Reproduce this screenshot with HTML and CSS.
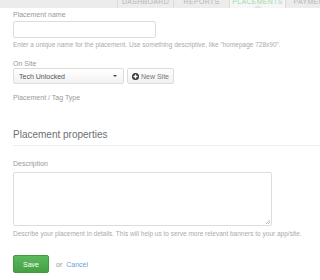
FILE: index.html
```html
<!DOCTYPE html>
<html>
<head>
    <meta charset="UTF-8">
    <title>Placement</title>
    <link rel="stylesheet" href="styles.css">
</head>
<body>
    <div class="topnav">
        <div class="tab">DASHBOARD</div>
        <div class="tab">REPORTS</div>
        <div class="tab active">PLACEMENTS</div>
        <div class="tab">PAYMENTS</div>
    </div>

    <div class="form">
        <div class="field">
            <label>Placement name</label>
            <input type="text" class="name-input">
            <div class="help">Enter a unique name for the placement. Use something descriptive, like "homepage 728x90".</div>
        </div>

        <div class="field">
            <label>On Site</label>
            <div class="site-row">
                <div class="select">
                    <span>Tech Unlocked</span>
                    <span class="caret"></span>
                </div>
                <div class="btn-new">
                    <svg width="7" height="7" viewBox="0 0 8 8"><circle cx="4" cy="4" r="4" fill="#333"/><rect x="3.2" y="1.6" width="1.6" height="4.8" fill="#fff"/><rect x="1.6" y="3.2" width="4.8" height="1.6" fill="#fff"/></svg>
                    New Site
                </div>
            </div>
        </div>

        <div class="field">
            <label>Placement / Tag Type</label>
        </div>

        <h2 class="section-title">Placement properties</h2>

        <div class="field desc">
            <label>Description</label>
            <div class="textarea"><span class="grip"></span></div>
            <div class="help">Describe your placement in details. This will help us to serve more relevant banners to your app/site.</div>
        </div>

        <div class="actions">
            <div class="btn-save">Save</div>
            <span class="or">or</span>
            <a class="cancel">Cancel</a>
        </div>
    </div>
</body>
</html>
```

FILE: styles.css
```css
body {
    margin: 0;
    padding: 0;
    font-family: 'Liberation Sans', Arial, sans-serif;
    background-color: #fff;
    color: #999;
    width: 320px;
    height: 280px;
    overflow: hidden;
}
.topnav {
    height: 8px;
    background: #ececec;
    display: flex;
    padding-left: 117px;
    overflow: hidden;
}
.tab {
    position: relative;
    width: 55px;
    flex: none;
    border-left: 1px solid #dcdcdc;
    font-size: 7px;
    line-height: 4px;
    color: #b5b5b5;
    text-align: center;
    letter-spacing: 0.3px;
}
.tab.active {
    background: #f6f6f6;
    color: #9fd8a8;
}
.tab.active::after {
    content: "";
    position: absolute;
    left: 24px;
    bottom: 0;
    border-left: 4px solid transparent;
    border-right: 4px solid transparent;
    border-bottom: 3px solid #e4e4e4;
}
.form {
    padding: 3px 13px 0 13px;
}
.field label {
    display: block;
    font-size: 7px;
    color: #999;
    margin-bottom: 3px;
}
.name-input {
    display: block;
    width: 143px;
    height: 17px;
    box-sizing: border-box;
    border: 1px solid #ddd;
    border-radius: 2px;
    margin: 0;
}
.help {
    font-size: 6.5px;
    color: #aaa;
    margin-top: 3px;
    margin-bottom: 12px;
    white-space: nowrap;
}
.site-row {
    display: flex;
    gap: 3px;
    margin-top: -2px;
    margin-bottom: 10px;
}
.select {
    width: 111px;
    height: 16px;
    box-sizing: border-box;
    border: 1px solid #ddd;
    border-radius: 2px;
    background: linear-gradient(#fff, #f2f2f2);
    display: flex;
    align-items: center;
    justify-content: space-between;
    padding: 0 6px 0 5px;
    font-size: 7px;
    color: #555;
}
.caret {
    border-left: 2px solid transparent;
    border-right: 2px solid transparent;
    border-top: 2px solid #444;
}
.btn-new {
    height: 16px;
    box-sizing: border-box;
    border: 1px solid #ddd;
    border-radius: 2px;
    background: linear-gradient(#fff, #f0f0f0);
    display: flex;
    align-items: center;
    gap: 2px;
    padding: 0 4px;
    font-size: 7px;
    color: #777;
}
.section-title {
    font-size: 10px;
    font-weight: normal;
    color: #6f6f6f;
    margin: 28px -13px 0 0;
    padding-bottom: 5px;
    border-bottom: 1px solid #eee;
}
.desc {
    margin-top: 14px;
}
.desc label {
    margin-bottom: 5px;
}
.desc .help {
    margin-top: 4px;
    margin-bottom: 0;
}
.textarea {
    position: relative;
    width: 259px;
    height: 54px;
    box-sizing: border-box;
    border: 1px solid #ddd;
    border-radius: 2px;
}
.grip {
    position: absolute;
    right: 1px;
    bottom: 1px;
    width: 4px;
    height: 4px;
    background: linear-gradient(135deg, transparent 45%, #bbb 45%, #bbb 55%, transparent 55%, transparent 70%, #bbb 70%, #bbb 80%, transparent 80%);
}
.actions {
    display: flex;
    align-items: center;
    margin-top: 18px;
    font-size: 7px;
}
.btn-save {
    width: 36px;
    height: 18px;
    box-sizing: border-box;
    border-radius: 2px;
    background: linear-gradient(#5cb85c, #45a045);
    border: 1px solid #3f9a3f;
    color: #fff;
    display: flex;
    align-items: center;
    justify-content: center;
    font-size: 7px;
}
.or {
    margin-left: 7px;
    color: #999;
}
.cancel {
    margin-left: 4px;
    color: #6a9fd8;
}
```
